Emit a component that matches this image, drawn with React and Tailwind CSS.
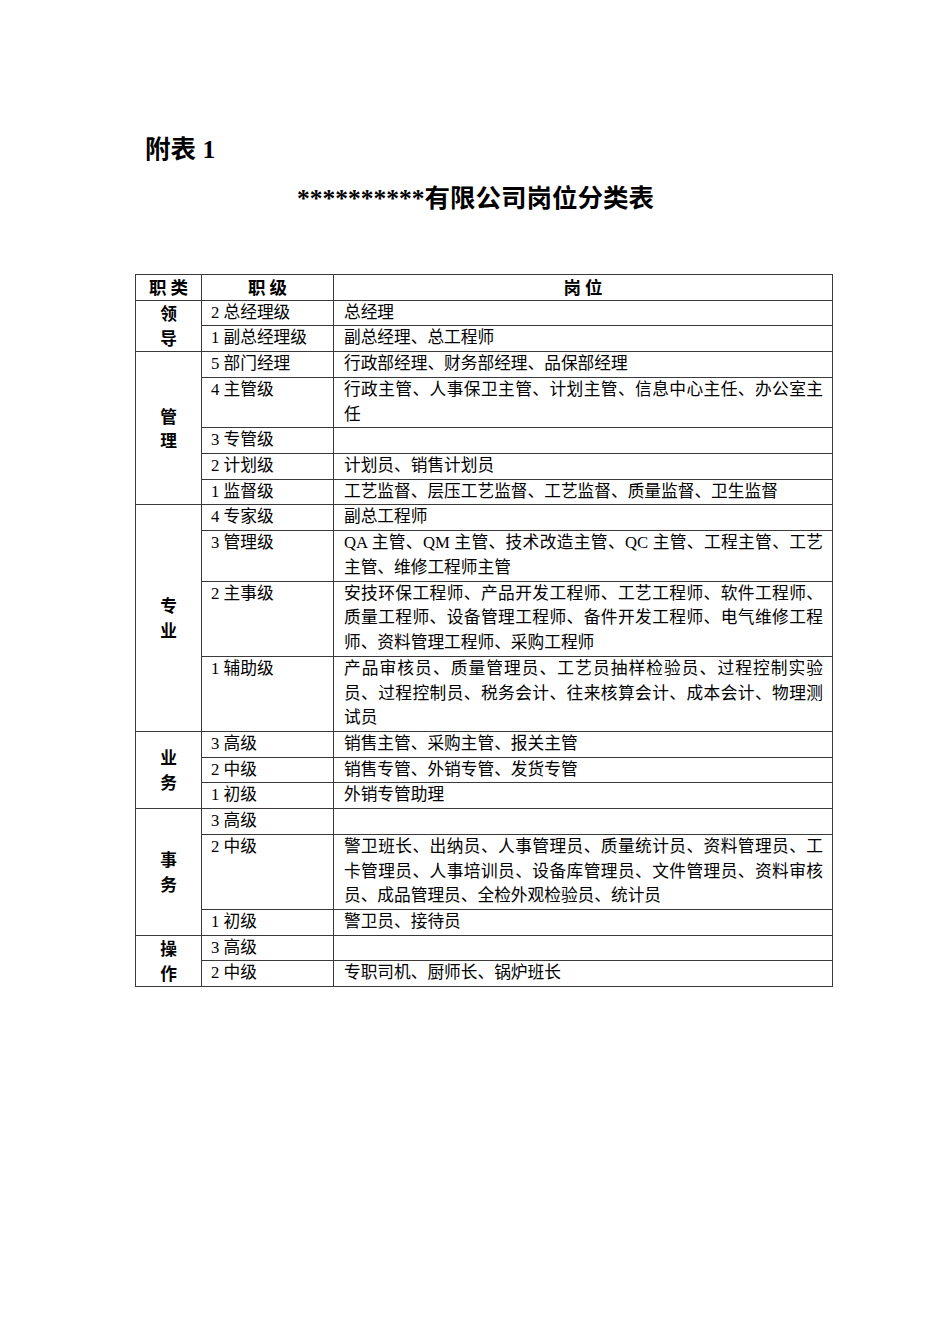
const groups = [
  {
    name: ["领", "导"],
    rows: [
      ["2 总经理级", "总经理"],
      ["1 副总经理级", "副总经理、总工程师"],
    ],
  },
  {
    name: ["管", "理"],
    rows: [
      ["5 部门经理", "行政部经理、财务部经理、品保部经理"],
      ["4 主管级", "行政主管、人事保卫主管、计划主管、信息中心主任、办公室主任"],
      ["3 专管级", ""],
      ["2 计划级", "计划员、销售计划员"],
      ["1 监督级", "工艺监督、层压工艺监督、工艺监督、质量监督、卫生监督"],
    ],
  },
  {
    name: ["专", "业"],
    rows: [
      ["4 专家级", "副总工程师"],
      ["3 管理级", "QA 主管、QM 主管、技术改造主管、QC 主管、工程主管、工艺主管、维修工程师主管"],
      ["2 主事级", "安技环保工程师、产品开发工程师、工艺工程师、软件工程师、质量工程师、设备管理工程师、备件开发工程师、电气维修工程师、资料管理工程师、采购工程师"],
      ["1 辅助级", "产品审核员、质量管理员、工艺员抽样检验员、过程控制实验员、过程控制员、税务会计、往来核算会计、成本会计、物理测试员"],
    ],
  },
  {
    name: ["业", "务"],
    rows: [
      ["3 高级", "销售主管、采购主管、报关主管"],
      ["2 中级", "销售专管、外销专管、发货专管"],
      ["1 初级", "外销专管助理"],
    ],
  },
  {
    name: ["事", "务"],
    rows: [
      ["3 高级", ""],
      ["2 中级", "警卫班长、出纳员、人事管理员、质量统计员、资料管理员、工卡管理员、人事培训员、设备库管理员、文件管理员、资料审核员、成品管理员、全检外观检验员、统计员"],
      ["1 初级", "警卫员、接待员"],
    ],
  },
  {
    name: ["操", "作"],
    rows: [
      ["3 高级", ""],
      ["2 中级", "专职司机、厨师长、锅炉班长"],
    ],
  },
];

const cell = "border border-[#3a3a3a] align-top";

export default function App() {
  return (
    <div
      className="w-[950px] h-[1344px] bg-white text-black"
      style={{ fontFamily: '"Liberation Serif", "Noto Sans CJK SC", serif' }}
    >
      <div className="pt-[131px] pl-[145px] text-[25.5px] font-bold leading-[38px]">
        附表 1
      </div>
      <div className="mt-[11px] text-center text-[25.5px] font-bold leading-[38px] pl-[1px]">
        **********有限公司岗位分类表
      </div>

      <table className="mt-[56px] ml-[135px] w-[697px] border-collapse table-fixed text-[16.7px] leading-[24.72px]">
        <colgroup>
          <col className="w-[66px]" />
          <col className="w-[132px]" />
          <col className="w-[499px]" />
        </colgroup>
        <thead>
          <tr style={{ fontFamily: '"Noto Sans CJK SC", sans-serif' }}>
            <th className={`${cell} text-center font-bold text-[17.5px]`}>职 类</th>
            <th className={`${cell} text-center font-bold text-[17.5px]`}>职 级</th>
            <th className={`${cell} text-center font-bold text-[17.5px]`}>岗 位</th>
          </tr>
        </thead>
        <tbody>
          {groups.map((g) =>
            g.rows.map((r, i) => (
              <tr key={g.name.join("") + i}>
                {i === 0 && (
                  <td
                    rowSpan={g.rows.length}
                    className="border border-[#3a3a3a] align-middle text-center font-bold"
                    style={{ fontFamily: '"Noto Sans CJK SC", sans-serif' }}
                  >
                    {g.name[0]}
                    <br />
                    {g.name[1]}
                  </td>
                )}
                <td className={`${cell} pl-[9px]`}>{r[0]}</td>
                <td className={`${cell} pl-[10px] pr-[9px] text-justify`}>
                  {r[1]}
                </td>
              </tr>
            ))
          )}
        </tbody>
      </table>
    </div>
  );
}
